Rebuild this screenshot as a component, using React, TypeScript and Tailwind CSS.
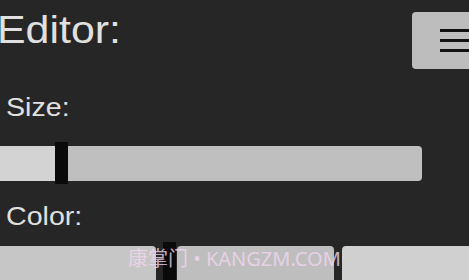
export default function App() {
  return (
    <div
      className="relative h-[280px] w-[469px] overflow-hidden bg-[#262626] text-[#e0e0e0]"
      style={{ fontFamily: '"Liberation Sans", Arial, sans-serif' }}
    >
      {/* header */}
      <div className="flex items-start justify-between">
        <div className="-ml-[3px] mt-[10px] origin-left scale-x-110 text-[39px] leading-none">Editor:</div>
        <button className="mt-[12px] -mr-[20px] flex h-[57px] w-[77px] shrink-0 flex-col items-start justify-center gap-[7px] rounded-[4px] bg-[#bdbdbd] pl-[28px]">
          <span className="h-[3px] w-[40px] bg-[#111]" />
          <span className="h-[3px] w-[40px] bg-[#111]" />
          <span className="h-[3px] w-[40px] bg-[#111]" />
        </button>
      </div>

      {/* size */}
      <div className="ml-[6px] mt-[25px] origin-left scale-x-110 text-[26px] leading-none">Size:</div>
      <div className="mt-[22px] flex h-[42px] items-center">
        <div className="-ml-[5px] h-[35px] w-[60px] shrink-0 rounded-l-[3px] bg-[#d3d3d3]" />
        <div className="h-[42px] w-[13px] shrink-0 bg-[#0a0a0a]" />
        <div className="h-[35px] w-[354px] shrink-0 rounded-r-[4px] bg-[#bfbfbf]" />
      </div>

      {/* color */}
      <div className="ml-[6px] mt-[19px] origin-left scale-x-110 text-[26px] leading-none">Color:</div>
      <div className="mt-[13px] flex items-start">
        <div className="-ml-[5px] mt-[4px] h-[40px] w-[161px] shrink-0 rounded-[4px] bg-[#c6c6c6]" />
        <div className="ml-[7px] h-[44px] w-[13px] shrink-0 bg-[#0a0a0a]" />
        <div className="ml-[1px] mt-[4px] h-[40px] w-[157px] shrink-0 rounded-[4px] bg-[#bebebe]" />
        <div className="ml-[8px] mt-[4px] h-[40px] w-[140px] shrink-0 rounded-[4px] bg-[#d0d0d0]" />
      </div>

      {/* watermark */}
      <div
        className="pointer-events-none absolute left-[128px] top-[249px] whitespace-nowrap text-[20px] leading-none text-[#f2d6f0]/80"
        style={{ fontFamily: '"Noto Sans", "Noto Sans CJK SC", sans-serif' }}
      >
        康掌门 • KANGZM.COM
      </div>
    </div>
  )
}
